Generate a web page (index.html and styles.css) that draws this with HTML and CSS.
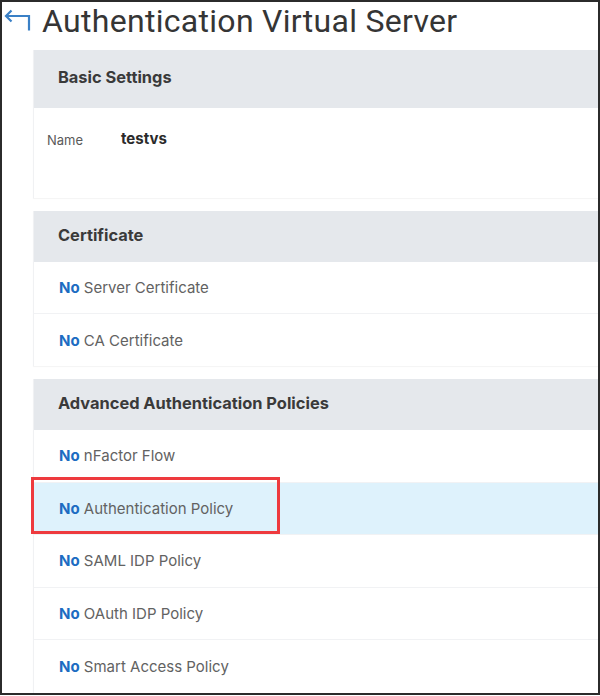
FILE: index.html
```html
<!DOCTYPE html>
<html>
<head>
<meta charset="utf-8">
<link rel="stylesheet" href="styles.css">
</head>
<body>
<div class="frame">
  <header class="title-bar">
    <svg class="back" width="30" height="26" viewBox="0 0 30 26" aria-hidden="true">
      <path d="M3 8 H26 V22.5" fill="none" stroke="#3a80c6" stroke-width="2.2"/>
      <path d="M8.5 2.5 L3 8 L8.5 13.5" fill="none" stroke="#3a80c6" stroke-width="2.2"/>
    </svg>
    <h1 class="title">Authentication Virtual Server</h1>
  </header>

  <section class="card">
    <div class="card-head card-head-tall">Basic Settings</div>
    <div class="card-body">
      <span class="label">Name</span>
      <span class="value">testvs</span>
    </div>
  </section>

  <section class="card">
    <div class="card-head">Certificate</div>
    <div class="row"><span class="no">No</span> Server Certificate</div>
    <div class="row"><span class="no">No</span> CA Certificate</div>
  </section>

  <section class="card card-last">
    <div class="card-head">Advanced Authentication Policies</div>
    <div class="row"><span class="no">No</span> nFactor Flow</div>
    <div class="row row-selected"><span class="no">No</span> Authentication Policy<span class="highlight"></span></div>
    <div class="row"><span class="no">No</span> SAML IDP Policy</div>
    <div class="row"><span class="no">No</span> OAuth IDP Policy</div>
    <div class="row"><span class="no">No</span> Smart Access Policy</div>
  </section>
</div>
</body>
</html>
```

FILE: styles.css
```css
* { box-sizing: border-box; }
html, body { margin: 0; padding: 0; background: #fff; }
body { font-family: Inter, "Noto Sans", sans-serif; }

.frame {
  width: 600px;
  height: 695px;
  border: 2px solid #2b2b2b;
  overflow: hidden;
  background: #fff;
}

.title-bar {
  display: flex;
  align-items: flex-start;
  height: 48px;
}
.back {
  margin: 6px 0 0 1px;
  flex: none;
}
.title {
  margin: 1px 0 0 9px;
  font-family: Roboto, "Liberation Sans", sans-serif;
  font-weight: 400;
  font-size: 32px;
  letter-spacing: 0.3px;
  line-height: 36px;
  color: #353535;
  white-space: nowrap;
}

.card {
  margin: 0 -20px 13px 31px;
  background: #fff;
  border-left: 1px solid #f0f1f3;
  box-shadow: 0 1px 1px rgba(0,0,0,0.04);
}
.card-last { margin-bottom: 0; }

.card-head {
  height: 51px;
  display: flex;
  align-items: center;
  padding: 0 0 4px 24px;
  background: #e5e8ec;
  font-weight: 700;
  font-size: 16.4px;
  color: #3a3a3a;
}
.card-head-tall { height: 58px; padding-bottom: 4px; }

.card-body {
  height: 90px;
  padding: 21px 0 0 13px;
  display: flex;
  align-items: baseline;
}
.label {
  font-size: 13px;
  color: #5a5a5a;
  width: 74px;
  position: relative;
  top: 1px;
}
.value {
  font-weight: 700;
  font-size: 15px;
  color: #2a2a2a;
}

.row {
  position: relative;
  height: 52px;
  display: flex;
  align-items: center;
  padding-left: 25px;
  font-size: 15px;
  color: #626262;
  border-bottom: 1px solid #f1f2f4;
  white-space: pre;
}
.row:last-child { border-bottom: none; }
.card-last .row { height: 52.6px; }
.no { color: #1d6cc2; font-weight: 700; }
.row-selected { background: #def2fc; }
.highlight {
  position: absolute;
  left: -3px;
  top: -6px;
  width: 249px;
  height: 57px;
  border: 3px solid #ee3a3e;
}
```
